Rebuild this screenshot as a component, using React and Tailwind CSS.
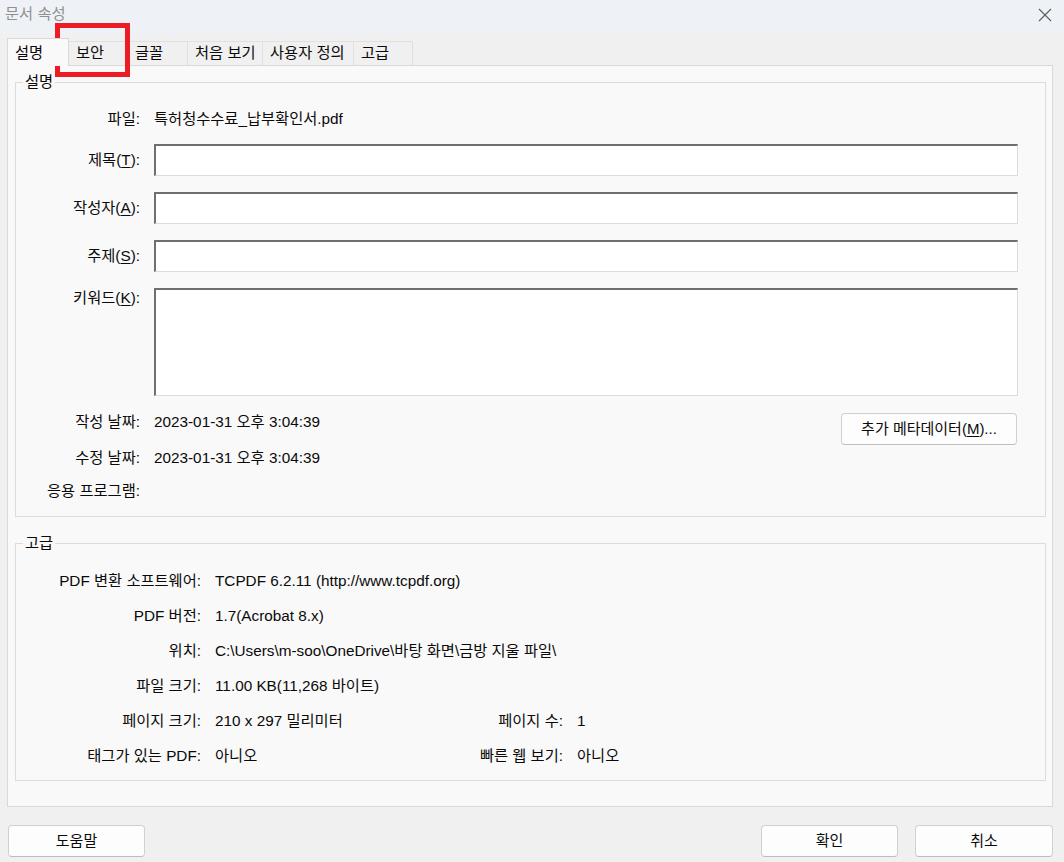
import React from 'react';

const tabs = ['설명', '보안', '글꼴', '처음 보기', '사용자 정의', '고급'];
const tabWidths = ['w-[62px]', 'w-[59px]', 'w-[60px]', 'w-[75px]', 'w-[91px]', 'w-[59px]'];

const Mn = ({ children }) => <span className="underline underline-offset-2">{children}</span>;

const TextBox = ({ tall }) => (
  <div className={`ml-[14px] w-[864px] ${tall ? 'h-[108px]' : 'h-[32px]'} bg-white border-t-2 border-l-2 border-[#6f6f6f] border-r border-b border-r-[#dcdcdc] border-b-[#dcdcdc]`} />
);

const WinButton = ({ children, className = '' }) => (
  <button className={`h-[32px] bg-[#fdfdfd] border border-[#d0d0d0] border-b-[#bdbdbd] rounded-[4px] text-[15px] leading-[20px] text-[#0a0a0a] ${className}`}>
    {children}
  </button>
);

const advRows = [
  ['PDF 변환 소프트웨어:', 'TCPDF 6.2.11 (http://www.tcpdf.org)'],
  ['PDF 버전:', '1.7(Acrobat 8.x)'],
  ['위치:', 'C:\\Users\\m-soo\\OneDrive\\바탕 화면\\금방 지울 파일\\'],
  ['파일 크기:', '11.00 KB(11,268 바이트)'],
  ['페이지 크기:', '210 x 297 밀리미터', '페이지 수:', '1'],
  ['태그가 있는 PDF:', '아니오', '빠른 웹 보기:', '아니오'],
];

export default function App() {
  return (
    <div className="relative w-[1064px] h-[862px] flex flex-col bg-[#f0f0f0] text-[#0a0a0a] font-['Liberation_Sans','Noto_Sans_CJK_KR',sans-serif] text-[15.3px] overflow-hidden">
      {/* title bar */}
      <div className="h-[34px] shrink-0 flex items-start justify-between pl-[5px] pr-[12px] pt-[4px] bg-[#eef2f7]">
        <span className="leading-[20px] text-[#8f8f8f]">문서 속성</span>
        <svg width="14" height="14" viewBox="0 0 14 14" className="mt-[4px]">
          <path d="M1 1 L13 13 M13 1 L1 13" stroke="#5c5c5c" strokeWidth="1.1" fill="none" />
        </svg>
      </div>

      <div className="flex-1 flex flex-col pt-[4px] pl-[7px] pr-[11px]">
        {/* tabs */}
        <div className="h-[27px] flex items-end">
          {tabs.map((t, i) =>
            i === 0 ? (
              <div key={t} className={`relative z-10 -mb-px h-[28px] ${tabWidths[i]} pl-[7px] pt-[4px] leading-[20px] bg-[#f9f9f9] border border-b-0 border-[#d9d9d9]`}>
                {t}
              </div>
            ) : (
              <div key={t} className={`h-[24px] ${tabWidths[i]} pl-[7px] pt-[1px] leading-[20px] bg-[#f0f0f0] border-t border-r border-[#e0e0e0]`}>
                {t}
              </div>
            )
          )}
        </div>

        {/* panel */}
        <div className="h-[742px] bg-[#f9f9f9] border border-[#d9d9d9] pt-[8px] pl-[7px] pr-[6px]">
          <fieldset className="border border-[#dcdcdc] pb-[16px]">
            <legend className="ml-[7px] px-[2px] leading-[16px]">설명</legend>
            <div className="mt-[13px] h-[32px] flex items-center leading-[20px]">
              <span className="w-[124px] text-right">파일:</span>
              <span className="ml-[14px]">특허청수수료_납부확인서.pdf</span>
            </div>
            <div className="mt-[9px] flex items-center leading-[20px]">
              <span className="w-[124px] text-right">제목(<Mn>T</Mn>):</span>
              <TextBox />
            </div>
            <div className="mt-[16px] flex items-center leading-[20px]">
              <span className="w-[124px] text-right">작성자(<Mn>A</Mn>):</span>
              <TextBox />
            </div>
            <div className="mt-[16px] flex items-center leading-[20px]">
              <span className="w-[124px] text-right">주제(<Mn>S</Mn>):</span>
              <TextBox />
            </div>
            <div className="mt-[16px] flex items-start leading-[20px]">
              <span className="w-[124px] text-right">키워드(<Mn>K</Mn>):</span>
              <TextBox tall />
            </div>
            <div className="mt-[17px] flex items-start leading-[18px]">
              <span className="w-[124px] text-right">작성 날짜:</span>
              <span className="ml-[14px]">2023-01-31 오후 3:04:39</span>
              <WinButton className="ml-auto mr-[28px] w-[176px]">
                추가 메타데이터(<Mn>M</Mn>)...
              </WinButton>
            </div>
            <div className="mt-[4px] flex items-start leading-[18px]">
              <span className="w-[124px] text-right">수정 날짜:</span>
              <span className="ml-[14px]">2023-01-31 오후 3:04:39</span>
            </div>
            <div className="mt-[15px] flex items-start leading-[18px]">
              <span className="w-[124px] text-right">응용 프로그램:</span>
            </div>
          </fieldset>

          <fieldset className="mt-[18px] border border-[#dcdcdc] pb-[7px]">
            <legend className="ml-[7px] px-[2px] leading-[16px]">고급</legend>
            <div className="mt-[12px]">
              {advRows.map((r) => (
                <div key={r[0]} className="h-[35px] flex items-center leading-[20px] whitespace-nowrap">
                  <span className="w-[185px] text-right">{r[0]}</span>
                  <span className="ml-[14px] w-[200px]">{r[1]}</span>
                  {r[2] && (
                    <>
                      <span className="w-[148px] text-right">{r[2]}</span>
                      <span className="ml-[14px]">{r[3]}</span>
                    </>
                  )}
                </div>
              ))}
            </div>
          </fieldset>
        </div>

        {/* bottom buttons */}
        <div className="mt-[18px] flex">
          <WinButton className="ml-px w-[137px]">도움말</WinButton>
          <WinButton className="ml-auto w-[137px]">확인</WinButton>
          <WinButton className="ml-[17px] w-[138px]">취소</WinButton>
        </div>
      </div>

      {/* red highlight */}
      <div className="absolute left-[55px] top-[23px] w-[75px] h-[54px] border-[5px] border-[#ec1c24]" />
    </div>
  );
}
